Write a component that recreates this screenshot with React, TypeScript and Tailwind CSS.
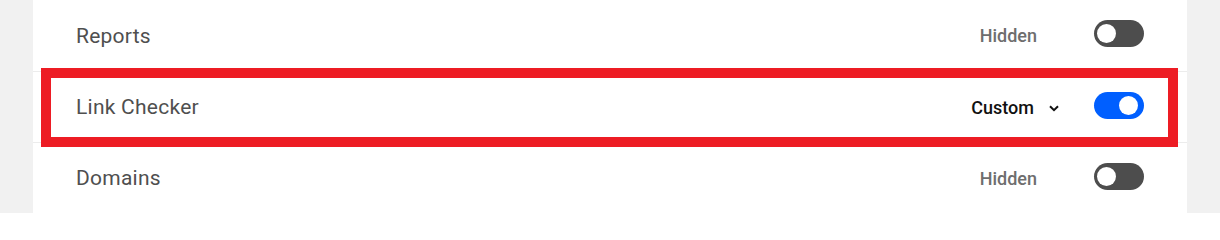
import React from "react";

function Toggle({ on }: { on: boolean }) {
  return (
    <div
      className={
        on
          ? "w-[50px] h-[27px] rounded-full bg-[#005fff] flex items-center justify-end pr-[6px] mb-[4px]"
          : "w-[50px] h-[27px] rounded-full bg-[#4d4d4d] flex items-center justify-start pl-[3px] mb-[4px]"
      }
    >
      <div className="w-[19px] h-[19px] rounded-full bg-white" />
    </div>
  );
}

function Row({
  label,
  status,
  custom,
  on,
  first,
}: {
  label: string;
  status: string;
  custom?: boolean;
  on: boolean;
  first?: boolean;
}) {
  return (
    <div
      className={
        first
          ? "h-[71px] flex items-center pl-[43px] pr-[43px]"
          : "h-[71px] border-t border-[#ececec] flex items-center pl-[43px] pr-[43px]"
      }
    >
      <div className="flex-1 mt-[2px] text-[21px] text-[#4f4f4f] tracking-[0.25px]">{label}</div>
      {custom ? (
        <div className="flex items-center mr-[35px] mt-[1px]">
          <span className="text-[18px] font-medium text-[#111111]">{status}</span>
          <svg
            className="ml-[15px] mt-[2px]"
            width="10"
            height="7"
            viewBox="0 0 10 7"
            fill="none"
          >
            <path d="M1 1.2 L5 5.2 L9 1.2" stroke="#111" strokeWidth="2" />
          </svg>
        </div>
      ) : (
        <span className="text-[18px] font-medium text-[#6e6e6e] mr-[57px]">{status}</span>
      )}
      <Toggle on={on} />
    </div>
  );
}

export default function App() {
  return (
    <div
      className="relative w-[1220px] h-[213px] bg-[#f1f1f1] overflow-hidden"
      style={{ fontFamily: "Roboto, 'Liberation Sans', sans-serif" }}
    >
      <div className="ml-[33px] w-[1154px] h-[213px] bg-white">
        <Row label="Reports" status="Hidden" on={false} first />
        <Row label="Link Checker" status="Custom" custom on={true} />
        <Row label="Domains" status="Hidden" on={false} />
      </div>
      <div className="absolute left-[41px] top-[68px] w-[1137px] h-[79px] border-[10px] border-[#ed1c24]" />
    </div>
  );
}
